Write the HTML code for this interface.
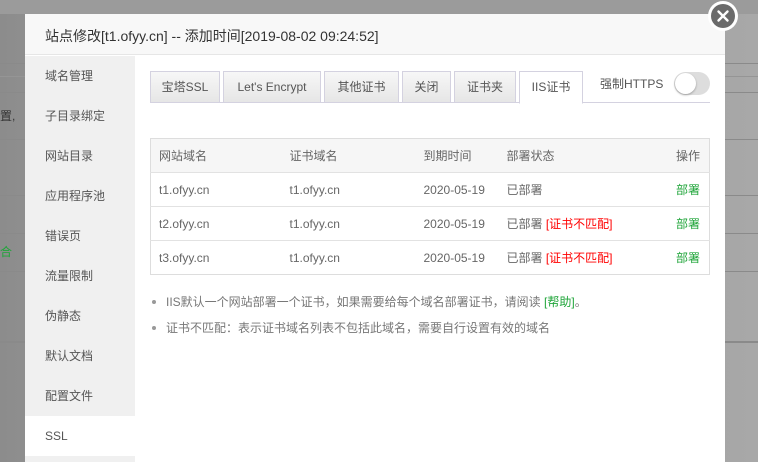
<!DOCTYPE html>
<html><head><meta charset="utf-8"><style>
*{margin:0;padding:0;box-sizing:border-box}
body{width:758px;height:462px;overflow:hidden;position:relative;font-family:"Liberation Sans","Noto Sans CJK SC",sans-serif;background:linear-gradient(90deg,#8c8c8c,#a6a6a6 40%,#9a9a9a 60%,#a8a8a8);}
.a{position:absolute}
.band{position:absolute;left:0;width:758px;height:1px;background:#8a8a8a}
.modal{position:absolute;left:25px;top:14px;width:700px;height:448px;background:#fff}
.hd{position:absolute;left:0;top:0;width:700px;height:41px;background:#f8f8f8;border-bottom:1px solid #e6e6e6;font-size:14px;color:#333;padding:12px 0 0 20px}
.side{position:absolute;left:0;top:42px;width:110px;height:406px;background:#f0f0f0}
.side div{height:40px;line-height:40px;padding-left:20px;font-size:12px;color:#555}
.side .on{background:#fff}
.tab{position:absolute;top:57px;height:32px;border:1px solid #d4d2e0;background:linear-gradient(#f7f7f7,#e6e6e6);font-size:12px;color:#555;text-align:center;line-height:30px}
.tab.act{background:#fff;border-bottom:1px solid #fff;height:33px;z-index:2}
table{position:absolute;left:125px;top:124px;width:560px;border-collapse:collapse;font-size:12px;color:#666}
td{height:34px;border-top:1px solid #e2e2e2;padding:0}
tr:first-child td{background:#f6f6f6;border-top:none}
table{border:1px solid #ddd}
.g{color:#20a53a}.r{color:#f00}
.note{position:absolute;left:127px;font-size:12px;color:#777}
.note:before{content:"";position:absolute;left:0;top:7px;width:4px;height:4px;border-radius:2px;background:#999}
</style></head><body>
<div class="a" style="left:0;top:0;width:758px;height:14px;background:#9b9b9b"></div>
<div class="band" style="top:63px"></div><div class="band" style="top:76px;background:#959595"></div><div class="band" style="top:92px"></div><div class="band" style="top:139px"></div><div class="band" style="top:195px"></div><div class="band" style="top:233px"></div><div class="band" style="top:271px"></div><div class="band" style="top:341px;height:2px"></div>
<div class="a" style="left:0;top:107px;font-size:12px;color:#333">置,</div>
<div class="a" style="left:0;top:243px;font-size:12px;color:#20a53a">合</div>
<div class="modal">
<div class="hd">站点修改[t1.ofyy.cn] -- 添加时间[2019-08-02 09:24:52]</div>
<div class="side">
<div>域名管理</div><div>子目录绑定</div><div>网站目录</div><div>应用程序池</div><div>错误页</div><div>流量限制</div><div>伪静态</div><div>默认文档</div><div>配置文件</div><div class="on">SSL</div>
</div>
<div class="a" style="left:125px;top:88px;width:560px;height:1px;background:#d4d2e0"></div>
<div class="tab" style="left:125px;width:70px">宝塔SSL</div>
<div class="tab" style="left:198px;width:98px">Let's Encrypt</div>
<div class="tab" style="left:299px;width:75px">其他证书</div>
<div class="tab" style="left:377px;width:49px">关闭</div>
<div class="tab" style="left:429px;width:62px">证书夹</div>
<div class="tab act" style="left:494px;width:64px">IIS证书</div>
<div class="a" style="left:575px;top:61px;font-size:12px;color:#555">强制HTTPS</div>
<div class="a" style="left:649px;top:58px;width:36px;height:23px;border-radius:12px;background:#ddd"><div class="a" style="left:1px;top:1px;width:21px;height:21px;border-radius:11px;background:#fff;box-shadow:0 1px 2px rgba(0,0,0,.3)"></div></div>
<table>
<tr><td style="padding-left:8px;width:139px">网站域名</td><td style="width:134px">证书域名</td><td style="width:83px">到期时间</td><td>部署状态</td><td style="text-align:right;padding-right:9px">操作</td></tr>
<tr><td style="padding-left:8px">t1.ofyy.cn</td><td>t1.ofyy.cn</td><td>2020-05-19</td><td>已部署</td><td class="g" style="text-align:right;padding-right:9px">部署</td></tr>
<tr><td style="padding-left:8px">t2.ofyy.cn</td><td>t1.ofyy.cn</td><td>2020-05-19</td><td>已部署 <span class="r">[证书不匹配]</span></td><td class="g" style="text-align:right;padding-right:9px">部署</td></tr>
<tr><td style="padding-left:8px">t3.ofyy.cn</td><td>t1.ofyy.cn</td><td>2020-05-19</td><td>已部署 <span class="r">[证书不匹配]</span></td><td class="g" style="text-align:right;padding-right:9px">部署</td></tr>
</table>
<div class="note" style="top:279px;padding-left:14px">IIS默认一个网站部署一个证书，如果需要给每个域名部署证书，请阅读 <span class="g">[帮助]</span>。</div>
<div class="note" style="top:305px;padding-left:14px">证书不匹配：表示证书域名列表不包括此域名，需要自行设置有效的域名</div>
</div>
<div class="a" style="left:708px;top:1px;width:30px;height:30px;border-radius:15px;background:#fff"></div>
<div class="a" style="left:711px;top:4px;width:24px;height:24px;border-radius:12px;background:#6b6b6b"></div>
<svg class="a" style="left:711px;top:4px" width="24" height="24"><path d="M7.5 7.5L16.5 16.5M16.5 7.5L7.5 16.5" stroke="#fff" stroke-width="2.4" stroke-linecap="round"/></svg>
</body></html>
